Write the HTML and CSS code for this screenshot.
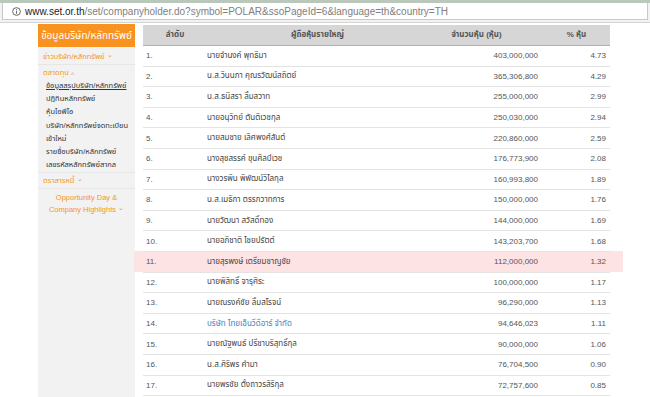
FILE: index.html
```html
<!DOCTYPE html>
<html lang="th">
<head>
    <meta charset="UTF-8">
    <title>ผู้ถือหุ้นรายใหญ่ - POLAR</title>
    <link rel="stylesheet" href="styles.css">
</head>
<body>
    <div class="chrome">
        <div class="tabs"></div>
        <div class="toolbar">
            <div class="omnibox">
                <svg class="info" width="9" height="9" viewBox="0 0 10 10">
                    <circle cx="5" cy="5" r="4.3" fill="none" stroke="#555" stroke-width="1"/>
                    <rect x="4.5" y="4.2" width="1" height="3.3" fill="#555"/>
                    <rect x="4.5" y="2.4" width="1" height="1" fill="#555"/>
                </svg>
                <span class="host">www.set.or.th</span><span class="path">/set/companyholder.do?symbol=POLAR&amp;ssoPageId=6&amp;language=th&amp;country=TH</span>
            </div>
        </div>
    </div>

    <div class="page">
        <aside class="sidebar">
            <div class="side-title">ข้อมูลบริษัท/หลักทรัพย์</div>
            <div class="side-menu">
                <div class="side-group">ข่าวบริษัท/หลักทรัพย์ <span class="caret">&#8964;</span></div>
                <div class="side-group open">ตลาดทุน <span class="caret up">^</span></div>
                <ul class="side-sub">
                    <li class="current">ข้อมูลสรุปบริษัท/หลักทรัพย์</li>
                    <li>ปฏิทินหลักทรัพย์</li>
                    <li>หุ้นไอพีโอ</li>
                    <li>บริษัท/หลักทรัพย์จดทะเบียน<br>เข้าใหม่</li>
                    <li>รายชื่อบริษัท/หลักทรัพย์</li>
                    <li>เลขรหัสหลักทรัพย์สากล</li>
                </ul>
                <div class="side-group">ตราสารหนี้ <span class="caret">&#8964;</span></div>
                <div class="side-group center">Opportunity Day &amp;<br>Company Highlights <span class="caret">&#8964;</span></div>
            </div>
        </aside>

        <main class="content">
            <table class="holders">
                <thead>
                    <tr>
                        <th class="c-no">ลำดับ</th>
                        <th class="c-name">ผู้ถือหุ้นรายใหญ่</th>
                        <th class="c-shares">จำนวนหุ้น (หุ้น)</th>
                        <th class="c-pct">% หุ้น</th>
                    </tr>
                </thead>
                <tbody>
                    <tr><td class="c-no">1.</td><td class="c-name">นายจำนงค์ พุทธิมา</td><td class="c-shares">403,000,000</td><td class="c-pct">4.73</td></tr>
                    <tr><td class="c-no">2.</td><td class="c-name">น.ส.วินนภา คุณรวัฒน์สถิตย์</td><td class="c-shares">365,306,800</td><td class="c-pct">4.29</td></tr>
                    <tr><td class="c-no">3.</td><td class="c-name">น.ส.ธนิสรา ลิ้มสวาท</td><td class="c-shares">255,000,000</td><td class="c-pct">2.99</td></tr>
                    <tr><td class="c-no">4.</td><td class="c-name">นายอนุวิทย์ ตันติเวชกุล</td><td class="c-shares">250,030,000</td><td class="c-pct">2.94</td></tr>
                    <tr><td class="c-no">5.</td><td class="c-name">นายสมชาย เลิศพงศ์สันต์</td><td class="c-shares">220,860,000</td><td class="c-pct">2.59</td></tr>
                    <tr><td class="c-no">6.</td><td class="c-name">นางสุชสรรค์ ขุนศิลป์เวช</td><td class="c-shares">176,773,900</td><td class="c-pct">2.08</td></tr>
                    <tr><td class="c-no">7.</td><td class="c-name">นางวรพิน พิพัฒน์วิไลกุล</td><td class="c-shares">160,993,800</td><td class="c-pct">1.89</td></tr>
                    <tr><td class="c-no">8.</td><td class="c-name">น.ส.เมธิกา ตรรกวาทการ</td><td class="c-shares">150,000,000</td><td class="c-pct">1.76</td></tr>
                    <tr><td class="c-no">9.</td><td class="c-name">นายวัฒนา สวัสดิ์ทอง</td><td class="c-shares">144,000,000</td><td class="c-pct">1.69</td></tr>
                    <tr><td class="c-no">10.</td><td class="c-name">นายอภิชาติ ไชยปรัตต์</td><td class="c-shares">143,203,700</td><td class="c-pct">1.68</td></tr>
                    <tr class="hover"><td class="c-no">11.</td><td class="c-name">นายสุรพงษ์ เตรียมชาญชัย</td><td class="c-shares">112,000,000</td><td class="c-pct">1.32</td></tr>
                    <tr><td class="c-no">12.</td><td class="c-name">นายพิสิทธิ์ จารุศิระ</td><td class="c-shares">100,000,000</td><td class="c-pct">1.17</td></tr>
                    <tr><td class="c-no">13.</td><td class="c-name">นายณรงค์ชัย ลิ้มสโรจน์</td><td class="c-shares">96,290,000</td><td class="c-pct">1.13</td></tr>
                    <tr><td class="c-no">14.</td><td class="c-name"><a class="link">บริษัท ไทยเอ็นวีดีอาร์ จำกัด</a></td><td class="c-shares">94,646,023</td><td class="c-pct">1.11</td></tr>
                    <tr><td class="c-no">15.</td><td class="c-name">นายณัฐพนธ์ ปรีชาบริสุทธิ์กุล</td><td class="c-shares">90,000,000</td><td class="c-pct">1.06</td></tr>
                    <tr><td class="c-no">16.</td><td class="c-name">น.ส.ศิริพร คำมา</td><td class="c-shares">76,704,500</td><td class="c-pct">0.90</td></tr>
                    <tr><td class="c-no">17.</td><td class="c-name">นายพรชัย ตั้งถาวรสิริกุล</td><td class="c-shares">72,757,600</td><td class="c-pct">0.85</td></tr>
                </tbody>
            </table>
        </main>
    </div>
</body>
</html>
```

FILE: styles.css
```css
html, body {
    margin: 0;
    padding: 0;
    height: 100%;
    overflow: hidden;
}
body {
    display: flex;
    flex-direction: column;
    background-color: #ffffff;
    font-family: "Liberation Sans", "Noto Sans Thai", "Noto Sans", sans-serif;
    color: #444;
}
.chrome {
    flex: none;
    background-color: #f2f2f2;
    border-bottom: 1px solid #d4d4d4;
}
.tabs {
    height: 3px;
    background-color: #b9c8bb;
}
.toolbar {
    padding: 0 2px 2px;
}
.omnibox {
    display: flex;
    align-items: center;
    height: 16px;
    background-color: #fff;
    border: 1px solid #c9c9c9;
    border-top: none;
    padding-left: 9px;
    font-size: 10px;
    white-space: nowrap;
}
.omnibox .info {
    margin-right: 4px;
}
.omnibox .host {
    color: #222;
}
.omnibox .path {
    color: #808080;
}
.page {
    flex: 1;
    min-height: 0;
    display: flex;
    align-items: flex-start;
    gap: 8px;
    padding-left: 38px;
    padding-top: 1px;
}
.sidebar {
    width: 97px;
    flex: none;
    display: flex;
    flex-direction: column;
    align-self: stretch;
}
.side-title {
    background-color: #f7931e;
    color: #fff;
    font-size: 10px;
    height: 23px;
    line-height: 23px;
    text-align: center;
    white-space: nowrap;
}
.side-menu {
    flex: 1;
    background-color: #f2f2f2;
    padding-top: 2px;
}
.side-group {
    color: #f7941d;
    font-size: 7.5px;
    padding: 2px 5px 1px;
    line-height: 12px;
    border-bottom: 1px solid #e6e6e6;
}
.side-group.open {
    border-bottom: none;
    padding-bottom: 0;
}
.side-group.center {
    text-align: center;
    border-bottom: none;
    padding: 3px 0 0;
}
.caret {
    font-size: 7px;
    display: inline-block;
    transform: translateY(-2px);
}
.caret.up {
    transform: translateY(2px);
}
.side-sub {
    list-style: none;
    margin: 0;
    padding: 0 0 1px 8px;
    border-bottom: 1px solid #e6e6e6;
}
.side-sub li {
    font-size: 7.5px;
    line-height: 13.2px;
    color: #333;
    white-space: nowrap;
}
.side-sub li.current {
    text-decoration: underline;
}
.content {
    padding-top: 1px;
}
.holders {
    width: 467px;
    border-collapse: collapse;
    font-size: 8px;
}
.holders th {
    background-color: #d6d6d6;
    color: #555;
    font-weight: bold;
    height: 20px;
    padding: 0;
    border-bottom: 1px solid #f7a33c;
}
.holders td {
    height: 19.6px;
    padding: 0;
    border-bottom: 1px solid #e3e3e3;
    color: #555;
    white-space: nowrap;
}
.holders .c-no {
    width: 61px;
}
td.c-no {
    padding-left: 3px;
}
th.c-name {
    padding-left: 18px;
}
.holders .c-shares {
    width: 128px;
}
td.c-shares {
    text-align: right;
    padding-right: 5px;
}
.holders .c-pct {
    width: 63px;
}
td.c-pct {
    text-align: right;
    padding-right: 4px;
}
td.c-name {
    color: #444;
}
.link {
    color: #3d84c6;
}
.holders tr.hover td {
    background-color: #fde3e3;
}
.holders tr.hover td:first-child {
    box-shadow: -9px 0 0 #fde3e3;
}
.holders tr.hover td:last-child {
    box-shadow: 13px 0 0 #fde3e3;
}
```
